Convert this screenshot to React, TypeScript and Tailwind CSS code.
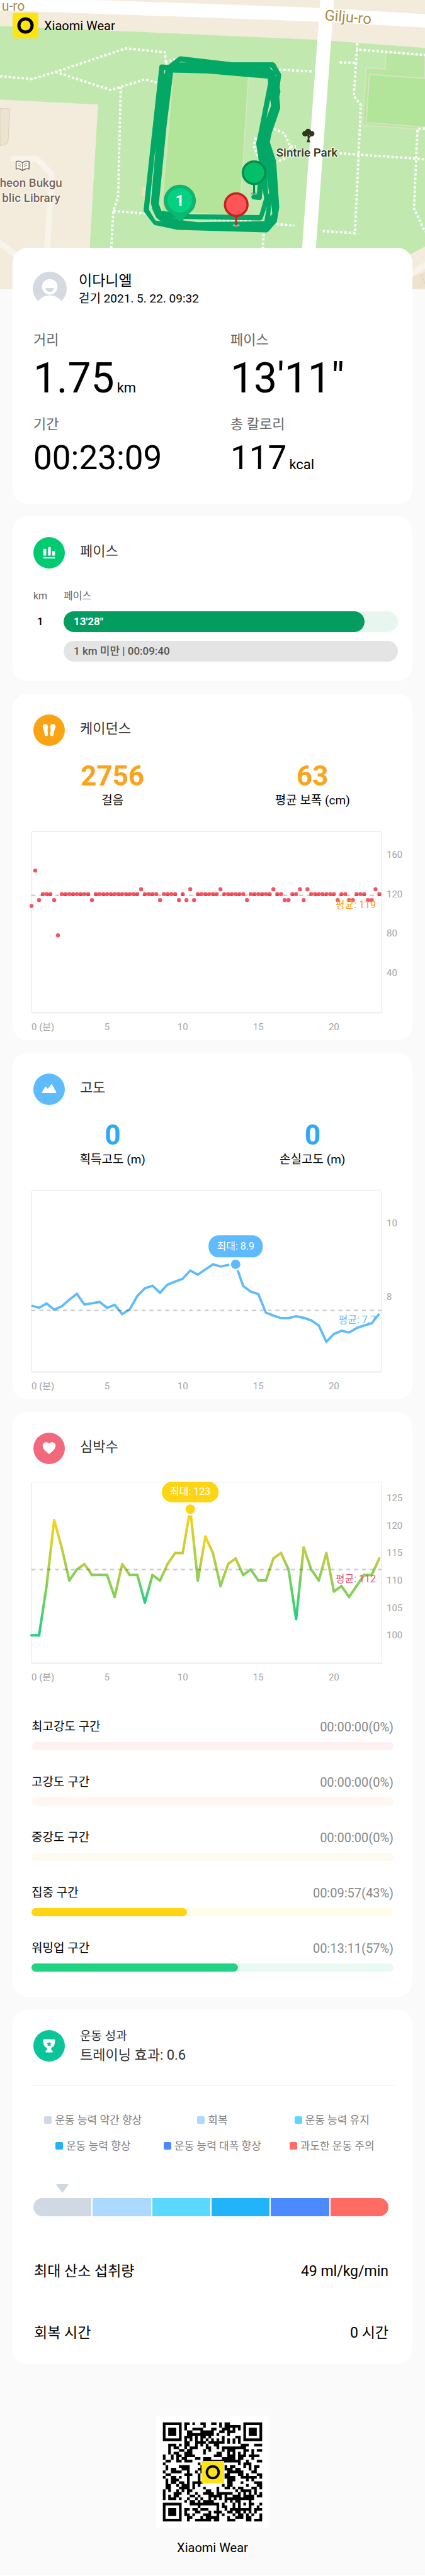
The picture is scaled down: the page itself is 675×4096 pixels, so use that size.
import * as React from 'react';

const DURATION = 23.15;
const PLOT_WIDTH = 556;
const PLOT_HEIGHT = 288;

const CADENCE_RUNS = [
  [108, 1], [144, 1], [114, 1], [120, 3], [114, 1], [78, 1], [120, 8], [114, 1],
  [120, 12], [125, 1], [120, 4], [114, 1], [120, 4], [114, 1], [120, 1], [114, 1],
  [125, 1], [114, 1], [120, 6], [125, 1], [120, 6], [114, 1], [120, 6], [125, 1],
  [120, 2], [114, 2], [120, 2], [125, 1], [114, 1], [125, 1], [120, 7], [114, 1],
  [120, 2], [114, 2], [120, 3], [114, 2], [125, 1], [120, 1],
];

const cadence = CADENCE_RUNS.flatMap(([value, count]) =>
  Array<number>(count).fill(value),
);

const altitude = [
  7.76, 7.7, 7.82, 7.65, 7.74, 7.92, 8.08, 7.79, 7.82, 7.86, 7.7, 7.78, 7.53,
  7.66, 8.02, 8.23, 8.3, 8.11, 8.33, 8.41, 8.49, 8.71, 8.6, 8.74, 8.88, 8.82,
  8.86, 8.88, 8.29, 8.14, 8.07, 7.57, 7.49, 7.42, 7.42, 7.47, 7.43, 7.36, 7.22,
  6.78, 6.99, 7.08, 7.03, 7.15, 7.22, 7.28, 7.54,
];

const heartRate = [
  100, 100, 109, 121, 116, 110, 112, 113, 111, 111, 111, 107, 113, 111, 111,
  106, 111, 110, 113, 115, 115, 123, 110, 118, 115, 109, 113, 114, 111, 112,
  110, 110, 114, 115, 112, 103, 116, 112, 110, 115, 108, 109, 107, 109, 111,
  111, 114,
];

const zones = [
  { name: '최고강도 구간', time: '00:00:00', percent: 0, track: 'bg-[#fef1f1]', fill: '' },
  { name: '고강도 구간', time: '00:00:00', percent: 0, track: 'bg-[#fff5f1]', fill: '' },
  { name: '중강도 구간', time: '00:00:00', percent: 0, track: 'bg-[#fffaf0]', fill: '' },
  { name: '집중 구간', time: '00:09:57', percent: 43, track: 'bg-[#fffceb]', fill: 'bg-[#fed512]' },
  { name: '워밍업 구간', time: '00:13:11', percent: 57, track: 'bg-[#e9faf3]', fill: 'bg-[#1fd383]' },
];

const effects = [
  { name: '운동 능력 약간 향상', color: 'bg-[#d0d9e3]' },
  { name: '회복', color: 'bg-[#abdafe]' },
  { name: '운동 능력 유지', color: 'bg-[#5bd8ff]' },
  { name: '운동 능력 향상', color: 'bg-[#22b4f8]' },
  { name: '운동 능력 대폭 향상', color: 'bg-[#4c8aff]' },
  { name: '과도한 운동 주의', color: 'bg-[#ff6c66]' },
];

// Dark modules of the code, one line per row, as first-last column ranges.
const QR_ROWS = [
  '0-6 8-9 11 14-15 18-19 21 23-24 30-36',
  '0 6 8 15 21 23-28 30 36',
  '0 2-4 6 8 11-14 18-19 22-24 26 28 30 32-34 36',
  '0 2-4 6 9-10 14-18 21-22 24-26 30 32-34 36',
  '0 2-4 6 9-18 20 24 30 32-34 36',
  '0 6 8-10 12 14-15 17 22 27-28 30 36',
  '0-6 8 10 12 14 16 18 20 22 24 26 28 30-36',
  '8-9 12-15 17-22 24 26 28',
  '2-4 6 8-9 12 14 16 19-20 29-31 34-36',
  '2 4-5 8 10-12 16-17 20 22-30',
  '2 6-7 9-10 15 17 22 24-26 30-31 33 35-36',
  '2 4-5 8-10 15 20-21 24 26 28 30 33',
  '0 3 5-6 8-11 19-21 24-26 28-30 32-35',
  '0 3 5 7-8 12-13 15-17 22-26 28-29 33',
  '1-2 5-6 8-10 15-28 31 35-36',
  '0 13 28 30-32',
  '1 6-9 14 23 25-26 30 32 34-35',
  '1 3-4 7-9 13-14 23-25 27-28 32 34',
  '0 3-6 9 12 14 24-29 33-34',
  '1-2 8-10 13 23-24 28-29 31 35-36',
  '0 3-4 6 9 13 23-26 29-34 36',
  '1 3-5 9 13 24-26 31 33',
  '1 3-4 6-7 9 11-14 24-25 29 34-36',
  '1-2 5 7-9 11 13 22 24-25 31 35-36',
  '1-2 6-9 11 15 20 23-24 26 28-29 33-34 36',
  '0 2 5 7 9-10 16-17 20 27 29-32 34',
  '0 4-6 9 12 15-18 20-25 28 30 32 34 36',
  '0 2 4-5 10-11 13 17-21 23 26-28 30-33 35-36',
  '0 2-4 6 9 12 14 17 19 21 23-33',
  '8 10-11 13 15-18 23 25 27-28 32',
  '0-6 10-20 22 26 28 30 32-33 36',
  '0 6 13 20 22-23 26 28 32 35',
  '0 2-4 6 8-9 11-12 14-16 20 23 25-32 34-36',
  '0 2-4 6 8 12-13 17 19-21 24-25 27-28 30 32 34',
  '0 2-4 6 8-9 11 15-17 20 22 26 28-29 31 33 36',
  '0 6 9-10 14 16-20 24 27-29 31-32 36',
  '0-6 9 12-17 19-20 24-26 31-32 34-36',
];

function Card({ children }: { children: React.ReactNode }) {
  return <section className="rounded-3xl bg-white">{children}</section>;
}

function CardHeader({
  icon,
  color,
  children,
}: {
  icon: React.ReactNode;
  color: string;
  children: React.ReactNode;
}) {
  return (
    <header className="flex items-center gap-6 px-[33px] pt-[33px] text-[#333]">
      <svg viewBox="0 0 50 50" className="size-[50px] shrink-0" aria-hidden="true">
        <circle cx="25" cy="25" r="25" fill={color} />
        {icon}
      </svg>
      {children}
    </header>
  );
}

function CardTitle({ children }: { children: React.ReactNode }) {
  return <h2 className="pb-1 text-[22px] leading-7">{children}</h2>;
}

function Metric({
  label,
  value,
  unit,
  large,
}: {
  label: string;
  value: string;
  unit?: string;
  large?: boolean;
}) {
  return (
    <div>
      <dt className="text-[22px] leading-7 text-[#666]">{label}</dt>
      <dd
        className={
          large
            ? 'mt-[14px] text-[66px] leading-[66px]'
            : 'mt-[11px] text-[53px] leading-[56px]'
        }
      >
        {value}
        {unit && <span className="ml-1 text-[22px] leading-none">{unit}</span>}
      </dd>
    </div>
  );
}

function Stats({
  items,
  color,
}: {
  items: { value: string; label: string }[];
  color: string;
}) {
  return (
    <dl className="mt-[26px] grid grid-cols-2 text-center">
      {items.map((item) => (
        <div key={item.label} className="flex flex-col-reverse gap-[3px]">
          <dt className="text-[19px] leading-7">{item.label}</dt>
          <dd className={`text-[44px] leading-[44px] font-bold ${color}`}>
            {item.value}
          </dd>
        </div>
      ))}
    </dl>
  );
}

function toX(index: number, step: number) {
  return (Math.min(index * step, DURATION) / DURATION) * PLOT_WIDTH;
}

function Chart({
  name,
  min,
  max,
  ticks,
  average,
  averageLabel,
  averageColor,
  children,
}: {
  name: string;
  min: number;
  max: number;
  ticks: number[];
  average: number;
  averageLabel: string;
  averageColor: string;
  children: (toY: (value: number) => number) => React.ReactNode;
}) {
  const toY = (value: number) => ((max - value) / (max - min)) * PLOT_HEIGHT;

  return (
    <svg
      viewBox="0 0 595 320"
      className="block h-auto w-full overflow-visible"
      role="img"
      aria-label={name}
    >
      <path d="M.5 288V.5H556V288" fill="none" stroke="#e6e6e6" />
      <path d="M0 288.5H556.5" stroke="#e2e2e2" strokeWidth="1.5" />
      <g fontSize="15" fill="#a6a6a6">
        {ticks.map((tick) => (
          <text key={tick} x="564" y={toY(tick) + 5}>
            {tick}
          </text>
        ))}
        <text x="0" y="316">
          0 (분)
        </text>
        {[5, 10, 15, 20].map((minute) => (
          <text key={minute} x={toX(minute, 1)} y="316" textAnchor="middle">
            {minute}
          </text>
        ))}
      </g>
      {children(toY)}
      <path
        d={`M0 ${toY(average)}H${PLOT_WIDTH}`}
        stroke="#000"
        strokeOpacity=".2"
        strokeWidth="2.5"
        strokeDasharray="6.25 6.25"
      />
      <text
        x="547"
        y={toY(average) + 20}
        textAnchor="end"
        fontSize="16"
        fill={averageColor}
      >
        {averageLabel}
      </text>
    </svg>
  );
}

function PeakMarker({
  x,
  y,
  width,
  color,
  label,
}: {
  x: number;
  y: number;
  width: number;
  color: string;
  label: string;
}) {
  // The bubble is cut off by the upper edge of the plot.
  const top = Math.max(0, y - 46);

  return (
    <g>
      <circle cx={x} cy={y} r="10" fill="#fff" />
      <circle cx={x} cy={y} r="7.5" fill={color} />
      <rect x={x - width / 2} y={top} width={width} height={y - 11 - top} rx="16" fill={color} />
      <text x={x} y={y - 23} textAnchor="middle" fontSize="16" fill="#fff">
        {label}
      </text>
    </g>
  );
}

function heartColor(value: number) {
  if (value >= 118) return '#fdd315';
  if (value >= 113) return '#c4cd3e';
  if (value >= 107) return '#86d058';
  return '#20d085';
}

function HeartLine({ toY }: { toY: (value: number) => number }) {
  return (
    <g strokeWidth="4" strokeLinecap="round">
      {heartRate.slice(1).map((value, i) => {
        const line = {
          x1: toX(i, 0.5),
          y1: toY(heartRate[i]),
          x2: toX(i + 1, 0.5),
          y2: toY(value),
        };

        return (
          <React.Fragment key={i}>
            <linearGradient id={`heart-${i}`} gradientUnits="userSpaceOnUse" {...line}>
              <stop stopColor={heartColor(heartRate[i])} />
              <stop offset="1" stopColor={heartColor(value)} />
            </linearGradient>
            <line {...line} stroke={`url(#heart-${i})`} />
          </React.Fragment>
        );
      })}
    </g>
  );
}

function RouteMap() {
  return (
    <svg
      viewBox="0 0 1080 736"
      className="block h-auto w-full bg-[#f3ecdc]"
      role="img"
      aria-label="Sintrie Park"
    >
      <path d="M0 66 806 101 1080 122V627L1040 648 1030 736H224L228 630 249 266 0 253Z" fill="#c1e9af" />
      <path d="M0 276 25 277 21 354Q19 366 10 369L0 370Z" fill="#ece3d0" stroke="#ddd2bb" strokeWidth="2" />
      <g fill="none" stroke="#f8f4eb" strokeWidth="15" strokeLinejoin="round" strokeLinecap="round">
        <path d="M34 404H93L131 442 119 650" />
        <path d="M-5 615 60 662M1085 672 1030 705" />
      </g>
      <path d="M1080 692 1040 708V736H1080Z" fill="#ece2cd" />
      <path d="M1070 697 1080 722" stroke="#dccfb4" strokeWidth="1.5" />
      <path d="M361 476H374V499H361Z" fill="#eedfc8" />
      <g stroke="#d8e5be" strokeWidth="3">
        <path d="M981 134 979 176 931 172 921 318 1080 330V141Z" fill="#b8e6a2" />
        <path d="M939 189 1085 200V324L930 312Z" fill="#b2e599" />
        <path d="M440 180 632 190 609 548 410 540Z" fill="#b2e599" />
      </g>
      <path d="M0 0H241L813 20 1080 36V70L809 55 0 26Z" fill="#fff" />
      <path d="M814 0H849L802 640H767Z" fill="#fff" />
      <g fill="none" stroke="#fff" strokeWidth="6" strokeDasharray="6 5">
        <path d="M0 194 81 201 141 183 320 123 419 133 422 165" />
        <path d="M141 183 281 229 368 202 403 211" />
        <path d="M307 221 300 501 288 537 282 640M288 537 370 543" />
        <path d="M420 160 445 150M709 177 796 182M863 159 906 160" />
        <path d="M908 110 907 126 1080 140M907 126 899 244 917 267 902 593 820 588" />
        <path d="M696 328 722 339 738 373 723 404 702 412M738 373 752 373" />
        <path d="M863 390 1080 405M650 350 645 371 657 400" />
        <path d="M1080 327 1061 328 1052 530 1080 590" />
        <path d="M702 570 748 574M670 595 667 640M533 557 640 563" />
      </g>

      <g stroke="#fff" strokeOpacity=".8" strokeWidth="4" paintOrder="stroke" strokeLinejoin="round">
        <text x="63" y="27" textAnchor="end" fontSize="34" fill="#a88b4a">
          u-ro
        </text>
        <text x="824" y="51" fontSize="38" fill="#a88b4a" transform="rotate(5 824 51)">
          Gilju-ro
        </text>
        <g fontSize="30" fill="#7a6557" fontWeight="500">
          <text x="158" y="475" textAnchor="end">
            heon Bukgu
          </text>
          <text x="153" y="513" textAnchor="end">
            blic Library
          </text>
        </g>
      </g>
      <g stroke="#7a6557" strokeWidth="2.5" fill="#fff" strokeLinejoin="round">
        <path d="M41 411Q50 408 57 414 65 408 74 411V430Q65 427 57 434 50 427 41 430Z" />
        <path d="M57 414V434M46 416 53 418M46 421 53 423M61 418 69 416M61 423 69 421" strokeWidth="1.5" />
      </g>

      {/* the track is drawn in thirds of a map unit */}
      <g transform="translate(360 120) scale(.33333)">
        <path
          fill="#03a766"
          fillRule="evenodd"
          d="M150 132 205 134 285 72Q296 67 308 71L690 115H1000Q1012 116 1018 126L1064 208 1052 305 1058 338 1049 380 1057 465 990 660 977 725 1025 870 1049 1222 1030 1335 965 1408Q955 1416 945 1414L272 1394 102 1358Q92 1354 88 1348L18 1256Q14 1248 15 1240L135 145Q136 134 150 132Z
            M240 195 500 201 815 228 961 240 964 275 885 680 873 735 893 870 885 1120 848 1123Q830 1140 843 1160L905 1166Q914 1164 916 1150L922 1080 934 1155 897 1282 370 1275 150 1249 131 1196 190 600Z
            M298 110 345 117 285 116ZM172 174 181 174 178 195 168 210ZM973 154 990 158 1002 182ZM1015 205 1026 220 1024 226ZM980 400 987 445 950 545Z
            M107 765 70 1190 82 1240 110 1300 140 1325 160 1332 105 1322 55 1240 98 830Z
            M225 1300 262 1310 900 1322Q915 1322 922 1310L955 1215 935 1328 430 1336 330 1325Z
            M957 1000 972 1125 964 1115ZM988 1190 996 1275 980 1290Z"
        />
        {/* first metres, leading from the start pin to the lap */}
        <path
          d="M857 1142 896 1145 908 1000"
          fill="none"
          stroke="#03a766"
          strokeWidth="40"
          strokeLinecap="round"
          strokeLinejoin="round"
        />
        <ellipse cx="857" cy="1117" rx="26" ry="9" fill="#8fb39a" />
        <path d="M857 1045V1117" stroke="#048f4c" strokeWidth="15" />
        <circle cx="857" cy="958" r="86" fill="#03bf6a" stroke="#048f4c" strokeWidth="17" />
        <path
          d="M291 1340 192 1240A120 120 0 1 1 390 1240Z"
          fill="#0ab971"
          stroke="#06854e"
          strokeWidth="3"
        />
        <circle cx="291" cy="1169" r="93" fill="#05d182" />
        <text x="291" y="1212" textAnchor="middle" fontSize="118" fontWeight="700" fill="#fff">
          1
        </text>
        <ellipse cx="721" cy="1360" rx="26" ry="9" fill="#a9b8ad" />
        <path d="M721 1290V1360" stroke="#c62121" strokeWidth="15" />
        <circle cx="721" cy="1202" r="86" fill="#fe5658" stroke="#c62121" strokeWidth="17" />
      </g>

      <g fill="#32361b">
        <path d="M779 362 782 354V347L774 343 776 340 782 344V334H786V346L791 341 793 343 786 351V356L789 362Z" />
        <circle cx="775" cy="340" r="7" />
        <circle cx="783" cy="335" r="7.5" />
        <circle cx="792" cy="340" r="7" />
      </g>
      <text
        x="702"
        y="398"
        fontSize="30"
        fontWeight="500"
        fill="#32361b"
        stroke="#fff"
        strokeOpacity=".8"
        strokeWidth="4"
        paintOrder="stroke"
      >
        Sintrie Park
      </text>
    </svg>
  );
}

function QrCode() {
  const modules = QR_ROWS.map((row, y) =>
    row
      .split(' ')
      .map((range) => {
        const [from, to = from] = range.split('-').map(Number);
        return `M${from} ${y}h${to - from + 1}v1h${from - to - 1}z`;
      })
      .join(''),
  ).join('');

  return (
    <svg
      viewBox="-2.5 -2.5 42 42"
      className="size-[179px] bg-white"
      role="img"
      aria-label="QR"
    >
      <path d={modules} fill="#000" />
      <rect x="14.4" y="14.4" width="8.4" height="8.4" fill="#fbe31a" />
      <circle cx="18.6" cy="18.6" r="2.2" fill="none" stroke="#000" strokeWidth=".9" />
    </svg>
  );
}

export default function App() {
  return (
    <div className="bg-[#fafafa] font-[Roboto,'Noto_Sans_CJK_KR',sans-serif] text-black">
      <div className="relative">
        <RouteMap />
        <div className="absolute top-5 left-5 flex items-center gap-[9px]">
          <svg viewBox="0 0 41 41" className="size-[41px]" aria-hidden="true">
            <rect width="41" height="41" rx="4" fill="#ffe414" />
            <circle cx="20.5" cy="20.5" r="10.5" fill="none" stroke="#000" strokeWidth="5" />
          </svg>
          <span className="text-[20px] leading-7">Xiaomi Wear</span>
        </div>
      </div>

      <main className="relative -mt-[66px] flex flex-col gap-5 px-5">
        <Card>
          <div className="flex items-center gap-[19px] px-8 pt-[38px]">
            <svg viewBox="0 0 54 54" className="size-[54px]" aria-hidden="true">
              <circle cx="27" cy="27" r="27" fill="#d5d9e2" />
              <circle cx="27" cy="24" r="12.3" fill="#fff" />
              <path d="M20.3 26H33.7A6.7 6.2 0 0 1 20.3 26Z" fill="#d5d9e2" />
              <circle cx="27" cy="61" r="23.5" fill="#fff" />
            </svg>
            <div className="-my-1 pt-1">
              <h1 className="text-[23px] leading-7">이다니엘</h1>
              <p className="text-[19px] leading-7">걷기 2021. 5. 22. 09:32</p>
            </div>
          </div>
          <dl className="mt-[41px] grid grid-cols-2 gap-x-6 gap-y-[26px] pb-[45px] pl-[33px]">
            <Metric label="거리" value="1.75" unit="km" large />
            <Metric label="페이스" value={'13\'11"'} large />
            <Metric label="기간" value="00:23:09" />
            <Metric label="총 칼로리" value="117" unit="kcal" />
          </dl>
        </Card>

        <Card>
          <CardHeader
            color="#02ca70"
            icon={
              <g fill="#fff">
                <rect x="16" y="18.8" width="4.4" height="10.8" rx="1" />
                <rect x="23.2" y="15.8" width="4.4" height="13.8" rx="1" />
                <rect x="30" y="22" width="4.4" height="7.6" rx="1" />
                <rect x="16" y="31.9" width="18.4" height="2" />
              </g>
            }
          >
            <CardTitle>페이스</CardTitle>
          </CardHeader>
          <div className="pt-8 pr-[23px] pb-[17px] pl-[33px]">
            <table className="w-full text-left">
              <thead>
                <tr className="text-[16px] leading-6 text-[#666]">
                  <th className="w-12 p-0 pb-3 font-normal">km</th>
                  <th className="p-0 pb-3 font-normal">페이스</th>
                </tr>
              </thead>
              <tbody className="text-[17px] leading-[33px] font-bold">
                <tr>
                  <td className="p-0 pb-[14px] pl-[6px] font-medium">1</td>
                  <td className="p-0 pb-[14px]">
                    <div className="rounded-full bg-[#e8f6f0]">
                      <div className="w-[90%] rounded-full bg-[#039e5f] px-4 text-white">
                        {'13\'28"'}
                      </div>
                    </div>
                  </td>
                </tr>
                <tr>
                  <td className="p-0 pb-[14px]" />
                  <td className="p-0 pb-[14px]">
                    <div className="rounded-full bg-[#e4e4e4] px-4 font-medium text-[#555]">
                      1 km 미만 | 00:09:40
                    </div>
                  </td>
                </tr>
              </tbody>
            </table>
          </div>
        </Card>

        <Card>
          <CardHeader
            color="#fca314"
            icon={
              <g fill="#fff">
                <path
                  id="foot"
                  d="M14.8 19.5c-.2-2.6 1.5-4.3 4.1-4.3 2.7 0 4.5 1.8 4.3 4.6-.1 2.2-.8 3.6-.7 5.8.1 2 .8 3.5.8 5.5 0 2.2-1 3.4-2.6 3.4-1.8 0-2.7-1.2-3-3.3-.3-2.4-.3-4-1.2-6.2-.8-1.9-1.6-3.4-1.7-5.5z"
                />
                <use href="#foot" transform="translate(50 0) scale(-1 1)" />
              </g>
            }
          >
            <CardTitle>케이던스</CardTitle>
          </CardHeader>
          <Stats
            color="text-[#faa31b]"
            items={[
              { value: '2756', label: '걸음' },
              { value: '63', label: '평균 보폭 (cm)' },
            ]}
          />
          <div className="mt-[35px] pr-[10px] pb-3 pl-[30px]">
            <Chart
              name="케이던스"
              min={-0.7}
              max={184}
              ticks={[160, 120, 80, 40]}
              average={118.8}
              averageLabel="평균: 119"
              averageColor="#f9a11b"
            >
              {(toY) =>
                cadence.map((value, i) => (
                  <circle key={i} cx={toX(i, 0.25)} cy={toY(value)} r="3.2" fill="#f65360" />
                ))
              }
            </Chart>
          </div>
        </Card>

        <Card>
          <CardHeader
            color="#5ebbfd"
            icon={
              <path
                d="M14.4 30.2 19.4 21.6 23 25.6 28.9 17.6 35.6 30.2Z"
                fill="#fff"
                stroke="#fff"
                strokeWidth="1.6"
                strokeLinejoin="round"
              />
            }
          >
            <CardTitle>고도</CardTitle>
          </CardHeader>
          <Stats
            color="text-[#2fa8fa]"
            items={[
              { value: '0', label: '획득고도 (m)' },
              { value: '0', label: '손실고도 (m)' },
            ]}
          />
          <div className="mt-[35px] pr-[10px] pb-3 pl-[30px]">
            <Chart
              name="고도"
              min={5.97}
              max={10.88}
              ticks={[10, 8]}
              average={7.63}
              averageLabel="평균: 7.7"
              averageColor="#5fbaf8"
            >
              {(toY) => (
                <>
                  <polyline
                    points={altitude.map((v, i) => `${toX(i, 0.5)},${toY(v)}`).join(' ')}
                    fill="none"
                    stroke="#60bbfa"
                    strokeWidth="3.8"
                  />
                  <PeakMarker
                    x={toX(27, 0.5)}
                    y={toY(altitude[27])}
                    width={86}
                    color="#5ebbfd"
                    label="최대: 8.9"
                  />
                </>
              )}
            </Chart>
          </div>
        </Card>

        <Card>
          <CardHeader
            color="#f1697e"
            icon={
              <path
                d="M25 34C20 30 14.7 26 14.7 20.8c0-3.2 2.4-5.5 5.4-5.5 2 0 3.8.8 4.9 2.3 1.1-1.5 2.9-2.3 4.9-2.3 3 0 5.4 2.3 5.4 5.5C35.3 26 30 30 25 34Z"
                fill="#fff"
              />
            }
          >
            <CardTitle>심박수</CardTitle>
          </CardHeader>
          <div className="mt-7 pr-[10px] pl-[30px]">
            <Chart
              name="심박수"
              min={95}
              max={128}
              ticks={[125, 120, 115, 110, 105, 100]}
              average={112}
              averageLabel="평균: 112"
              averageColor="#e9566f"
            >
              {(toY) => (
                <>
                  <HeartLine toY={toY} />
                  <PeakMarker
                    x={toX(21, 0.5)}
                    y={toY(heartRate[21])}
                    width={90}
                    color="#fed512"
                    label="최대: 123"
                  />
                </>
              )}
            </Chart>
          </div>
          <ul className="mt-[58px] flex flex-col gap-[39px] px-[30px] pb-10">
            {zones.map((zone) => (
              <li key={zone.name}>
                <div className="flex justify-between leading-6">
                  <span className="text-[19px]">{zone.name}</span>
                  <span className="text-[20px] text-[#888]">
                    {zone.time}({zone.percent}%)
                  </span>
                </div>
                <div className={`mt-3 h-[13px] rounded-full ${zone.track}`}>
                  <div
                    className={`h-full rounded-full ${zone.fill}`}
                    style={{ width: `${zone.percent}%` }}
                  />
                </div>
              </li>
            ))}
          </ul>
        </Card>

        <Card>
          <CardHeader
            color="#0ac59a"
            icon={
              <>
                <path
                  d="M17 14.6H33Q34.5 14.6 34.4 16.5C34.3 23 33 26 28.3 28.6V31.2L30.5 33V35.4H19.5V33L21.7 31.2V28.6C17 26 15.7 23 15.6 16.5Q15.5 14.6 17 14.6Z"
                  fill="#fff"
                />
                <path
                  d="M25 18.2 26.2 20.7 29 21.1 27 23 27.5 25.8 25 24.5 22.5 25.8 23 23 21 21.1 23.8 20.7Z"
                  fill="#0ac59a"
                />
              </>
            }
          >
            <div className="-my-2">
              <p className="text-[19px] leading-[30px]">운동 성과</p>
              <h2 className="text-[22px] leading-[30px]">트레이닝 효과: 0.6</h2>
            </div>
          </CardHeader>
          <hr className="mx-[29px] mt-[38px] border-[#efefef]" />
          <ul className="mt-[42px] grid grid-cols-3 gap-y-[17px] px-[33px] text-[17px] leading-6 text-[#808080]">
            {effects.map((effect) => (
              <li
                key={effect.name}
                className="flex items-center justify-center gap-[5px] whitespace-nowrap"
              >
                <span className={`size-3 rounded-xs ${effect.color}`} />
                {effect.name}
              </li>
            ))}
          </ul>
          <div className="mt-[49px] mr-[38px] ml-[33px] grid grid-cols-6 gap-x-[2px] gap-y-2">
            <svg
              viewBox="0 0 20 14"
              className="h-[14px] w-5 justify-self-center"
              aria-hidden="true"
            >
              <path d="M1.5 0H18.5Q20.5 0 19.3 1.5L10 14 .7 1.5Q-.5 0 1.5 0Z" fill="#d0d9e3" />
            </svg>
            <div className="col-span-6 grid grid-cols-6 gap-[2px] overflow-hidden rounded-full">
              {effects.map((effect) => (
                <div key={effect.name} className={`h-[29px] ${effect.color}`} />
              ))}
            </div>
          </div>
          <dl className="mt-[72px] flex flex-col gap-[66px] pr-[38px] pb-[33px] pl-[34px] text-[23px] leading-8">
            <div className="flex justify-between">
              <dt>최대 산소 섭취량</dt>
              <dd>49 ml/kg/min</dd>
            </div>
            <div className="flex justify-between">
              <dt>회복 시간</dt>
              <dd>0 시간</dd>
            </div>
          </dl>
        </Card>
      </main>

      <footer className="flex flex-col items-center gap-4 pt-[82px] pb-[29px]">
        <QrCode />
        <p className="text-[20px] leading-[30px]">Xiaomi Wear</p>
      </footer>
    </div>
  );
}
